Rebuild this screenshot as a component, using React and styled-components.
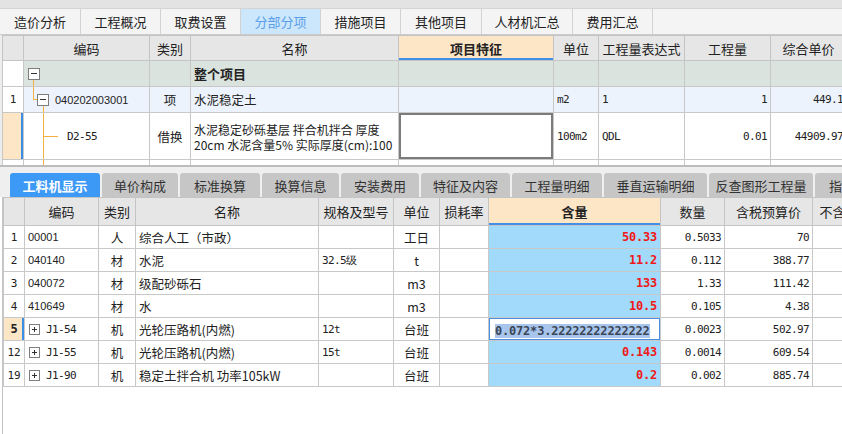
import React from "react";
import styled, { createGlobalStyle, css } from "styled-components";

const GlobalStyle = createGlobalStyle`
  body {
    margin: 0;
    background: #fff;
    font-family: "Noto Sans CJK SC", "Noto Sans", sans-serif;
    color: #222;
  }
`;

const moduleTabs = [
  { title: "造价分析", width: 81 },
  { title: "工程概况", width: 80 },
  { title: "取费设置", width: 80 },
  { title: "分部分项", width: 80, active: true },
  { title: "措施项目", width: 80 },
  { title: "其他项目", width: 81 },
  { title: "人材机汇总", width: 91 },
  { title: "费用汇总", width: 80 },
];

const detailTabs = [
  { title: "工料机显示", width: 90, active: true },
  { title: "单价构成", width: 76 },
  { title: "标准换算", width: 80 },
  { title: "换算信息", width: 77 },
  { title: "安装费用", width: 78 },
  { title: "特征及内容", width: 89 },
  { title: "工程量明细", width: 90 },
  { title: "垂直运输明细", width: 103 },
  { title: "反查图形工程量", width: 104 },
  { title: "指引信息", width: 80 },
];

const upperCols = [21, 126, 41, 208, 155, 45, 86, 86, 76];
const lowerCols = [21, 74, 37, 183, 75, 46, 49, 172, 64, 88, 92];

const lowerHeads = [
  "", "编码", "类别", "名称", "规格及型号", "单位", "损耗率", "含量", "数量", "含税预算价", "不含税预算价",
];

const materials = [
  { n: "1", code: "00001", type: "人", name: "综合人工（市政）", spec: "", unit: "工日", amt: "50.33", qty: "0.5033", price: "70" },
  { n: "2", code: "040140", type: "材", name: "水泥", spec: "32.5级", unit: "t", amt: "11.2", qty: "0.112", price: "388.77" },
  { n: "3", code: "040072", type: "材", name: "级配砂砾石", spec: "", unit: "m3", amt: "133", qty: "1.33", price: "111.42" },
  { n: "4", code: "410649", type: "材", name: "水", spec: "", unit: "m3", amt: "10.5", qty: "0.105", price: "4.38" },
  { n: "5", code: "J1-54", tree: true, current: true, type: "机", name: "光轮压路机(内燃)", spec: "12t", unit: "台班", edit: "0.072*3.22222222222222", qty: "0.0023", price: "502.97" },
  { n: "12", code: "J1-55", tree: true, type: "机", name: "光轮压路机(内燃)", spec: "15t", unit: "台班", amt: "0.143", qty: "0.0014", price: "609.54" },
  { n: "19", code: "J1-90", tree: true, type: "机", name: "稳定土拌合机 功率105kW", spec: "", unit: "台班", amt: "0.2", qty: "0.002", price: "885.74" },
];

const Page = styled.div`
  width: 842px;
  height: 434px;
  overflow: hidden;
  display: flex;
  flex-direction: column;
  background: #fff;
`;

const TopStrip = styled.div`
  flex: none;
  height: 8px;
  background: #e3e3e3;
`;

const ModuleBar = styled.div`
  flex: none;
  display: flex;
  height: 27px;
  box-sizing: border-box;
  background: #f4f4f4;
  border-top: 1px solid #d4d4d4;
  border-bottom: 1px solid #cbcbcb;
`;

const ModuleTab = styled.div`
  flex: none;
  width: ${(p) => p.$width}px;
  box-sizing: border-box;
  display: flex;
  align-items: center;
  justify-content: center;
  font-size: 13px;
  border-right: 1px solid #d2d2d2;
  color: ${(p) => (p.$active ? "#5b9fe8" : "#222")};
  background: ${(p) => (p.$active ? "#cce6fc" : "transparent")};
`;

const UpperPane = styled.div`
  flex: none;
  height: 130px;
  overflow: hidden;
  padding-left: 2px;
  background: #ededed;
`;

const Splitter = styled.div`
  flex: none;
  height: 2px;
  background: #bcbcbc;
`;

const TabStrip = styled.div`
  flex: none;
  display: flex;
  gap: 2px;
  height: 30px;
  box-sizing: border-box;
  padding: 6px 0 0 10px;
  background: #efefef;
  overflow: hidden;
`;

const DetailTab = styled.div`
  flex: none;
  width: ${(p) => p.$width}px;
  height: 24px;
  display: flex;
  align-items: center;
  justify-content: center;
  border-radius: 3px 3px 0 0;
  font-size: 13px;
  white-space: nowrap;
  overflow: hidden;
  background: ${(p) => (p.$active ? "#3d99f6" : "#c6c6c6")};
  color: ${(p) => (p.$active ? "#fff" : "#333")};
  font-weight: ${(p) => (p.$active ? 700 : 400)};
`;

const LowerPane = styled.div`
  flex: 1;
  overflow: hidden;
  margin-left: 2px;
  border-left: 1px solid #c4c4c4;
  background: #fff;
`;

const Grid = styled.table`
  border-collapse: collapse;
  table-layout: fixed;
  width: ${(p) => p.$width}px;
  background: #fff;
`;

const Row = styled.tr`
  height: ${(p) => p.$h}px;
`;

const HeadCell = styled.th`
  padding: 0;
  border: 1px solid #c4c4c4;
  font-size: 13px;
  font-weight: ${(p) => (p.$active ? 700 : 400)};
  color: #222;
  text-align: center;
  white-space: nowrap;
  overflow: hidden;
  background: ${(p) => (p.$active ? "#fde6c6" : "#e6e6e6")};
  ${(p) =>
    p.$active &&
    css`
      box-shadow: inset 0 -2px 0 #3f8fe8;
    `}
`;

const fonts = {
  cjk: css`
    font-family: "Noto Sans CJK SC", sans-serif;
    font-size: 12.5px;
  `,
  sans: css`
    font-family: "Liberation Sans", Arial, sans-serif;
    font-size: 11px;
  `,
  song: css`
    font-family: "DejaVu Sans Mono", monospace;
    font-size: 11px;
    letter-spacing: -0.6px;
  `,
  red: css`
    font-family: "DejaVu Sans Mono", monospace;
    font-size: 12px;
    font-weight: 700;
    letter-spacing: -0.2px;
    color: #f01818;
  `,
};

const Cell = styled.td`
  position: relative;
  padding: 0 ${(p) => (p.$align === "center" ? 0 : 3)}px;
  border: 1px solid #c8c8c8;
  white-space: nowrap;
  overflow: hidden;
  color: #222;
  text-align: ${(p) => p.$align || "left"};
  background: ${(p) => p.$bg || "transparent"};
  ${(p) => fonts[p.$font || "cjk"]}
  ${(p) =>
    p.$bold &&
    css`
      font-weight: 700;
      font-size: 13px;
    `}
`;

const RowNum = styled(Cell)`
  text-align: center;
  padding: 0;
  ${fonts.song}
  letter-spacing: 0;
  ${(p) =>
    p.$current &&
    css`
      background: #fde6c6;
      box-shadow: inset -2px 0 0 #3b8ee6;
      font-weight: 700;
      font-size: 12px;
    `}
`;

const FeatureEdit = styled(Cell)`
  box-shadow: inset 0 0 0 2px #7c7c7c;
`;

const EditCell = styled(Cell)`
  background: #fff;
  box-shadow: inset 0 0 0 1px #4a90e2;
  padding-left: 6px;
`;

const Selection = styled.span`
  background: #a8c5ec;
  color: #3b4656;
  font-family: "DejaVu Sans Mono", monospace;
  font-size: 12px;
  font-weight: 700;
  letter-spacing: -0.2px;
`;

const NameLines = styled.div`
  display: flex;
  flex-direction: column;
  gap: 0;
  font-size: 12px;
  line-height: 15px;
  padding-top: 1px;
`;

const TreeContent = styled.div`
  position: relative;
  z-index: 1;
  display: flex;
  align-items: center;
  gap: 6px;
  padding-left: ${(p) => p.$indent}px;
`;

const ToggleBox = styled.span`
  position: relative;
  flex: none;
  width: ${(p) => p.$size || 11}px;
  height: ${(p) => p.$size || 11}px;
  box-sizing: border-box;
  border: 1px solid #7d7d7d;
  background: #fff;
  &::before {
    content: "";
    position: absolute;
    left: 2px;
    right: 2px;
    top: 50%;
    height: 1px;
    margin-top: -0.5px;
    background: #333;
  }
  ${(p) =>
    p.$plus &&
    css`
      &::after {
        content: "";
        position: absolute;
        top: 2px;
        bottom: 2px;
        left: 50%;
        width: 1px;
        margin-left: -0.5px;
        background: #333;
      }
    `}
`;

const VLine = styled.span`
  position: absolute;
  left: ${(p) => p.$left}px;
  top: ${(p) => p.$top || 0}px;
  height: ${(p) => p.$height}px;
  width: 1px;
  background: #f5b044;
`;

const HLine = styled.span`
  position: absolute;
  left: ${(p) => p.$left}px;
  top: ${(p) => p.$top}px;
  width: ${(p) => p.$width}px;
  height: 1px;
  background: #f5b044;
`;

const Cols = ({ widths }) => (
  <colgroup>
    {widths.map((w, i) => (
      <col key={i} style={{ width: w }} />
    ))}
  </colgroup>
);

const UpperGrid = () => (
  <Grid $width={upperCols.reduce((a, b) => a + b, 0)}>
    <Cols widths={upperCols} />
    <tbody>
      <Row $h={25}>
        <HeadCell />
        <HeadCell>编码</HeadCell>
        <HeadCell>类别</HeadCell>
        <HeadCell>名称</HeadCell>
        <HeadCell $active>项目特征</HeadCell>
        <HeadCell>单位</HeadCell>
        <HeadCell>工程量表达式</HeadCell>
        <HeadCell>工程量</HeadCell>
        <HeadCell>综合单价</HeadCell>
      </Row>
      <Row $h={26}>
        <RowNum $bg="#fff" />
        <Cell $bg="#dbe3de">
          <VLine $left={9} $top={18} $height={9} />
          <TreeContent $indent={1}>
            <ToggleBox $size={12} />
          </TreeContent>
        </Cell>
        <Cell $bg="#dbe3de" />
        <Cell $bg="#dbe3de" $bold>整个项目</Cell>
        <Cell $bg="#dbe3de" />
        <Cell $bg="#dbe3de" />
        <Cell $bg="#dbe3de" />
        <Cell $bg="#dbe3de" />
        <Cell $bg="#dbe3de" />
      </Row>
      <Row $h={26}>
        <RowNum $bg="#fff">1</RowNum>
        <Cell $bg="#edf3fd" $font="sans">
          <VLine $left={9} $top={-1} $height={13} />
          <HLine $left={9} $top={12} $width={5} />
          <VLine $left={19} $top={18} $height={9} />
          <TreeContent $indent={10}>
            <ToggleBox $size={12} />
            <span>040202003001</span>
          </TreeContent>
        </Cell>
        <Cell $bg="#edf3fd" $align="center">项</Cell>
        <Cell $bg="#edf3fd">水泥稳定土</Cell>
        <Cell $bg="#edf3fd" />
        <Cell $bg="#edf3fd" $font="song">m2</Cell>
        <Cell $bg="#edf3fd" $font="song">1</Cell>
        <Cell $bg="#edf3fd" $font="song" $align="right">1</Cell>
        <Cell $bg="#edf3fd" $font="song" $align="right">449.1</Cell>
      </Row>
      <Row $h={47}>
        <RowNum $current />
        <Cell $font="song">
          <VLine $left={19} $top={-1} $height={49} />
          <HLine $left={19} $top={23} $width={15} />
          <TreeContent $indent={40}>D2-55</TreeContent>
        </Cell>
        <Cell $align="center">借换</Cell>
        <Cell>
          <NameLines>
            <span>水泥稳定砂砾基层 拌合机拌合 厚度</span>
            <span>20cm 水泥含量5% 实际厚度(cm):100</span>
          </NameLines>
        </Cell>
        <FeatureEdit />
        <Cell $font="song">100m2</Cell>
        <Cell $font="song">QDL</Cell>
        <Cell $font="song" $align="right">0.01</Cell>
        <Cell $font="song" $align="right">44909.97</Cell>
      </Row>
      <Row $h={22}>
        <RowNum />
        <Cell>
          <VLine $left={19} $top={-1} $height={24} />
        </Cell>
        <Cell />
        <Cell />
        <Cell />
        <Cell />
        <Cell />
        <Cell />
        <Cell />
      </Row>
    </tbody>
  </Grid>
);

const LowerGrid = () => (
  <Grid $width={lowerCols.reduce((a, b) => a + b, 0)}>
    <Cols widths={lowerCols} />
    <tbody>
      <Row $h={28}>
        {lowerHeads.map((h, i) => (
          <HeadCell key={i} $active={h === "含量"}>
            {h}
          </HeadCell>
        ))}
      </Row>
      {materials.map((m) => (
        <Row $h={23} key={m.n}>
          <RowNum $current={m.current}>{m.n}</RowNum>
          {m.tree ? (
            <Cell $font="song">
              <TreeContent $indent={1}>
                <ToggleBox $plus />
                <span>{m.code}</span>
              </TreeContent>
            </Cell>
          ) : (
            <Cell $font="sans">{m.code}</Cell>
          )}
          <Cell $align="center">{m.type}</Cell>
          <Cell>{m.name}</Cell>
          <Cell $font="song">{m.spec}</Cell>
          <Cell $align="center">{m.unit}</Cell>
          <Cell />
          {m.edit ? (
            <EditCell>
              <Selection>{m.edit}</Selection>
            </EditCell>
          ) : (
            <Cell $bg="#a1dafa" $font="red" $align="right">
              {m.amt}
            </Cell>
          )}
          <Cell $font="song" $align="right">{m.qty}</Cell>
          <Cell $font="song" $align="right">{m.price}</Cell>
          <Cell />
        </Row>
      ))}
    </tbody>
  </Grid>
);

const App = () => {
  return (
    <Page>
      <GlobalStyle />
      <TopStrip />
      <ModuleBar>
        {moduleTabs.map((t) => (
          <ModuleTab key={t.title} $width={t.width} $active={t.active}>
            {t.title}
          </ModuleTab>
        ))}
      </ModuleBar>
      <UpperPane>
        <UpperGrid />
      </UpperPane>
      <Splitter />
      <TabStrip>
        {detailTabs.map((t) => (
          <DetailTab key={t.title} $width={t.width} $active={t.active}>
            {t.title}
          </DetailTab>
        ))}
      </TabStrip>
      <LowerPane>
        <LowerGrid />
      </LowerPane>
    </Page>
  );
};

export default App;
